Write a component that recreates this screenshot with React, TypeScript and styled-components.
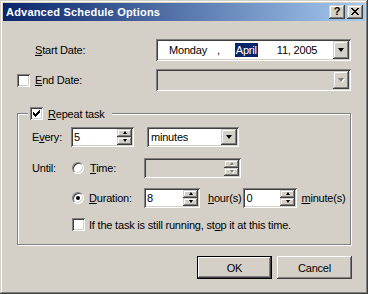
import React from "react";
import styled, { createGlobalStyle, css } from "styled-components";

const Global = createGlobalStyle`
  html, body { margin: 0; padding: 0; background: #d4d0c8; }
  body { font-family: "Liberation Sans", Arial, sans-serif; font-size: 11px; color: #000; }
  * { box-sizing: border-box; }
`;

const raised = css`
  background: #d4d0c8;
  box-shadow: inset -1px -1px #404040, inset 1px 1px #d4d0c8, inset -2px -2px #808080, inset 2px 2px #fff;
`;

const sunken = css`
  box-shadow: inset 1px 1px #808080, inset -1px -1px #fff, inset 2px 2px #404040, inset -2px -2px #d4d0c8;
`;

const Window = styled.div`
  width: 368px;
  height: 294px;
  padding: 3px;
  background: #d4d0c8;
  box-shadow: inset -1px -1px #404040, inset 1px 1px #d4d0c8, inset -2px -2px #808080, inset 2px 2px #fff;
  display: flex;
  flex-direction: column;
`;

const TitleBar = styled.div`
  height: 18px;
  display: flex;
  align-items: center;
  padding: 0 2px 0 3px;
  background: linear-gradient(to right, #0a246a, #a6caf0);
`;

const TitleText = styled.div`
  flex: 1;
  color: #fff;
  font-weight: bold;
  font-size: 11px;
  letter-spacing: 0.2px;
`;

const CaptionButton = styled.div<{ $gap?: number }>`
  ${raised};
  width: 16px;
  height: 14px;
  margin-left: ${(p) => p.$gap ?? 0}px;
  display: flex;
  align-items: center;
  justify-content: center;
  font-weight: bold;
  font-size: 11px;
  line-height: 1;
  padding-bottom: 1px;
`;

const Body = styled.div`
  flex: 1;
  display: flex;
  flex-direction: column;
  padding: 18px 13px 0 14px;
  letter-spacing: -0.2px;
`;

const TopGrid = styled.div`
  display: grid;
  grid-template-columns: 18px 121px 195px;
  grid-auto-rows: 22px;
  row-gap: 8px;
  align-items: center;
`;

const Label = styled.span<{ $col?: string }>`
  grid-column: ${(p) => p.$col ?? "auto"};
  white-space: nowrap;
`;

const Field = styled.div<{ $w?: number; $h?: number; $disabled?: boolean }>`
  ${sunken};
  width: ${(p) => (p.$w ? `${p.$w}px` : "100%")};
  height: ${(p) => p.$h ?? 20}px;
  padding: 2px;
  display: flex;
  align-items: stretch;
  background: ${(p) => (p.$disabled ? "#d4d0c8" : "#fff")};
  flex-shrink: 0;
`;

const FieldText = styled.div<{ $pl?: number }>`
  flex: 1;
  display: flex;
  align-items: center;
  padding-left: ${(p) => p.$pl ?? 1}px;
  white-space: nowrap;
  overflow: hidden;
`;

const DateSeg = styled.span<{ $ml?: number; $sel?: boolean }>`
  margin-left: ${(p) => p.$ml ?? 0}px;
  ${(p) =>
    p.$sel &&
    css`
      background: #0a246a;
      color: #fff;
      padding: 1px 1px;
    `}
`;

const DropBtn = styled.div<{ $w?: number }>`
  ${raised};
  width: ${(p) => p.$w ?? 16}px;
  display: flex;
  align-items: center;
  justify-content: center;
`;

const DownArrow = styled.div<{ $disabled?: boolean }>`
  width: 0;
  height: 0;
  border-left: 3.5px solid transparent;
  border-right: 3.5px solid transparent;
  border-top: 4px solid ${(p) => (p.$disabled ? "#808080" : "#000")};
  ${(p) => p.$disabled && css`filter: drop-shadow(1px 1px 0 #fff);`}
`;

const Spin = styled.div<{ $w?: number }>`
  width: ${(p) => p.$w ?? 15}px;
  display: flex;
  flex-direction: column;
`;

const SpinBtn = styled.div`
  ${raised};
  flex: 1;
  display: flex;
  align-items: center;
  justify-content: center;
`;

const SmallArrow = styled.div<{ $up?: boolean; $disabled?: boolean }>`
  width: 0;
  height: 0;
  border-left: 2.5px solid transparent;
  border-right: 2.5px solid transparent;
  ${(p) =>
    p.$up
      ? css`border-bottom: 3px solid ${p.$disabled ? "#808080" : "#000"};`
      : css`border-top: 3px solid ${p.$disabled ? "#808080" : "#000"};`}
  ${(p) => p.$disabled && css`filter: drop-shadow(1px 1px 0 #fff);`}
`;

const CheckBox = styled.div<{ $ml?: number }>`
  width: 13px;
  height: 13px;
  background: #fff;
  ${sunken};
  margin-left: ${(p) => p.$ml ?? 0}px;
  display: flex;
  align-items: center;
  justify-content: center;
  flex-shrink: 0;
`;

const Radio = styled.div<{ $ml?: number }>`
  width: 12px;
  height: 12px;
  border-radius: 50%;
  background: #fff;
  border: 1px solid;
  border-color: #808080 #fff #fff #808080;
  box-shadow: inset 1px 1px #404040, inset -1px -1px #d4d0c8;
  margin-left: ${(p) => p.$ml ?? 0}px;
  display: flex;
  align-items: center;
  justify-content: center;
  flex-shrink: 0;
`;

const Dot = styled.div`
  width: 4px;
  height: 4px;
  border-radius: 50%;
  background: #000;
`;

const Group = styled.fieldset`
  margin: 16px 1px 0 0;
  padding: 6px 0 9px 0;
  min-width: 0;
  border: 1px solid #808080;
  box-shadow: inset 1px 1px #fff, 1px 1px #fff;
`;

const Legend = styled.legend`
  margin-left: 10px;
  padding: 0 7px 0 2px;
  background: #d4d0c8;
  display: flex;
  align-items: center;
  gap: 5px;
  height: 13px;
`;

const Inner = styled.div`
  margin-left: 14px;
  display: flex;
  flex-direction: column;
`;

const Row = styled.div<{ $mt?: number; $h?: number }>`
  display: grid;
  grid-template-columns: 39px 73px auto;
  align-items: center;
  height: ${(p) => p.$h ?? 21}px;
  margin-top: ${(p) => p.$mt ?? 0}px;
`;

const Cell = styled.div<{ $gap?: number; $span?: string }>`
  display: flex;
  align-items: center;
  gap: ${(p) => p.$gap ?? 0}px;
  grid-column: ${(p) => p.$span ?? "auto"};
  white-space: nowrap;
`;

const Text = styled.span<{ $ml?: number }>`
  margin-left: ${(p) => p.$ml ?? 0}px;
  white-space: nowrap;
`;

const Buttons = styled.div`
  margin-top: 11px;
  display: flex;
  justify-content: flex-end;
  gap: 5px;
`;

const PushButton = styled.div<{ $default?: boolean }>`
  width: 75px;
  height: 23px;
  display: flex;
  align-items: center;
  justify-content: center;
  background: #d4d0c8;
  ${(p) =>
    p.$default
      ? css`
          box-shadow: inset 0 0 0 1px #000, inset -2px -2px #404040, inset 2px 2px #fff, inset -3px -3px #808080;
        `
      : css`
          box-shadow: inset -1px -1px #404040, inset 1px 1px #fff, inset -2px -2px #808080, inset 2px 2px #d4d0c8;
        `}
`;

const Check = () => (
  <svg width="7" height="7" viewBox="0 0 7 7" shapeRendering="crispEdges">
    <path d="M0 2 L2 4 L6 0 L7 0 L7 3 L2 7 L0 5 Z" fill="#000" />
  </svg>
);

const XGlyph = () => (
  <svg width="8" height="7" viewBox="0 0 8 7" shapeRendering="crispEdges">
    <path d="M0 0h2v1h1v1h2v-1h1v-1h2v1h-1v1h-1v1h-1v1h1v1h1v1h1v1h-2v-1h-1v-1h-2v1h-1v1h-2v-1h1v-1h1v-1h1v-1h-1v-1h-1v-1h-1z" fill="#000" />
  </svg>
);

const SpinEdit = ({ value, w, disabled }: { value?: string; w: number; disabled?: boolean }) => (
  <Field $w={w} $disabled={disabled}>
    <FieldText>{value}</FieldText>
    <Spin>
      <SpinBtn>
        <SmallArrow $up $disabled={disabled} />
      </SpinBtn>
      <SpinBtn>
        <SmallArrow $disabled={disabled} />
      </SpinBtn>
    </Spin>
  </Field>
);

export default function App() {
  return (
    <>
      <Global />
      <Window>
        <TitleBar>
          <TitleText>Advanced Schedule Options</TitleText>
          <CaptionButton>?</CaptionButton>
          <CaptionButton $gap={2}>
            <XGlyph />
          </CaptionButton>
        </TitleBar>
        <Body>
          <TopGrid>
            <Label $col="2">
              <u>S</u>tart Date:
            </Label>
            <Field $h={22}>
              <FieldText $pl={11}>
                <DateSeg>Monday</DateSeg>
                <DateSeg $ml={10}>,</DateSeg>
                <DateSeg $ml={15} $sel>
                  April
                </DateSeg>
                <DateSeg $ml={19}>11, 2005</DateSeg>
              </FieldText>
              <DropBtn>
                <DownArrow />
              </DropBtn>
            </Field>
            <CheckBox />
            <Label>
              <u>E</u>nd Date:
            </Label>
            <Field $h={22} $disabled>
              <FieldText />
              <DropBtn>
                <DownArrow $disabled />
              </DropBtn>
            </Field>
          </TopGrid>
          <Group>
            <Legend>
              <CheckBox>
                <Check />
              </CheckBox>
              <span>
                <u>R</u>epeat task
              </span>
            </Legend>
            <Inner>
              <Row>
                <Text>
                  E<u>v</u>ery:
                </Text>
                <Cell $span="2 / 4" $gap={13}>
                  <SpinEdit value="5" w={63} />
                  <Field $w={92}>
                    <FieldText $pl={2}>minutes</FieldText>
                    <DropBtn>
                      <DownArrow />
                    </DropBtn>
                  </Field>
                </Cell>
              </Row>
              <Row $mt={10}>
                <Text>Until:</Text>
                <Cell $gap={6}>
                  <Radio $ml={1} />
                  <Text>
                    <u>T</u>ime:
                  </Text>
                </Cell>
                <SpinEdit w={97} disabled />
              </Row>
              <Row $mt={9}>
                <span />
                <Cell $gap={5}>
                  <Radio $ml={1}>
                    <Dot />
                  </Radio>
                  <Text>
                    <u>D</u>uration:
                  </Text>
                </Cell>
                <Cell>
                  <SpinEdit value="8" w={56} />
                  <Text $ml={8}>
                    <u>h</u>our(s)
                  </Text>
                  <Text $ml={2} as="div">
                    <SpinEdit value="0" w={54} />
                  </Text>
                  <Text $ml={4}>
                    <u>m</u>inute(s)
                  </Text>
                </Cell>
              </Row>
              <Row $mt={6}>
                <span />
                <Cell $span="2 / 4" $gap={4}>
                  <CheckBox $ml={1} />
                  <Text>
                    If the task is still running, st<u>o</u>p it at this time.
                  </Text>
                </Cell>
              </Row>
            </Inner>
          </Group>
          <Buttons>
            <PushButton $default>OK</PushButton>
            <PushButton>Cancel</PushButton>
          </Buttons>
        </Body>
      </Window>
    </>
  );
}
